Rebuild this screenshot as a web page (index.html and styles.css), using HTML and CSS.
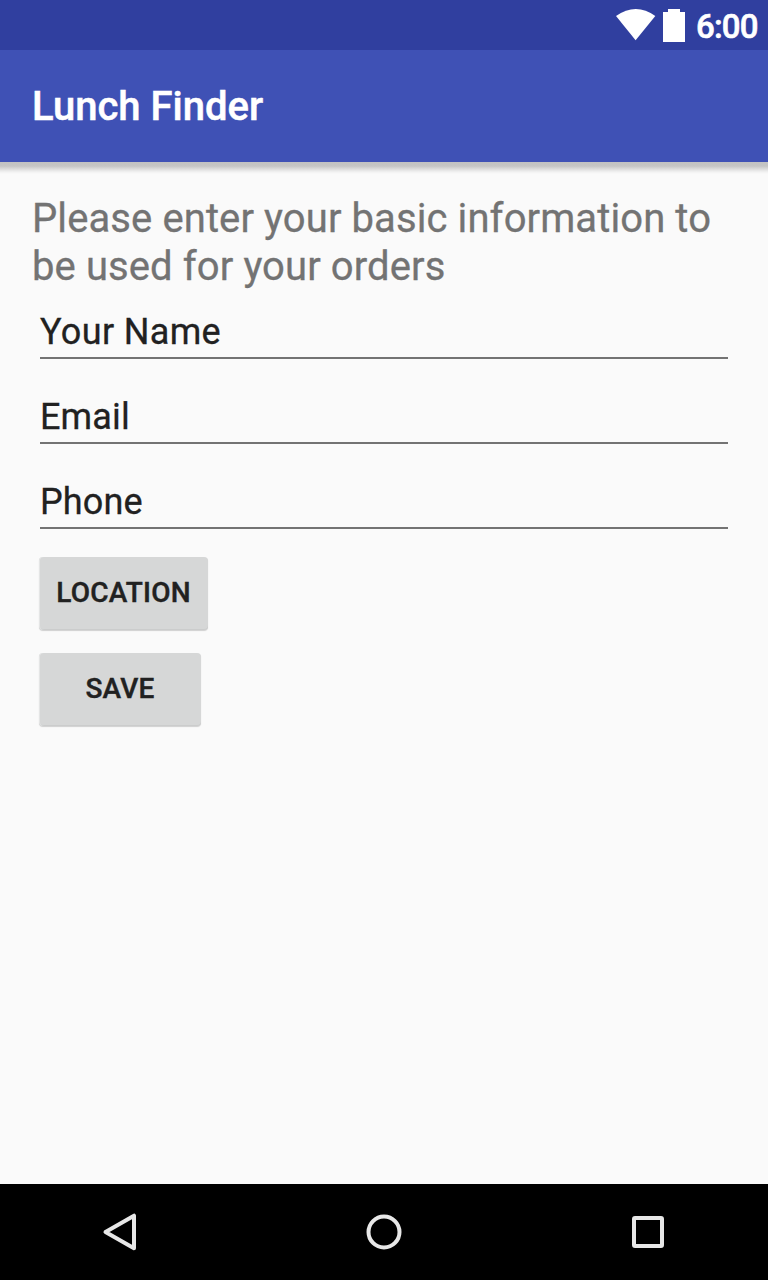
FILE: index.html
```html
<!DOCTYPE html>
<html lang="en">
<head>
<meta charset="utf-8">
<title>Lunch Finder</title>
<link rel="stylesheet" href="styles.css">
</head>
<body>
<div class="screen">
  <div class="status">
    <svg class="wifi" width="40" height="32" viewBox="0 0 40 32"><path d="M0 7Q20-7 39.3 7L19.6 31.3Z" fill="#fff"/></svg>
    <svg class="battery" width="22" height="33" viewBox="0 0 22 33"><path d="M5 0h12v3h5v30H0V3h5z" fill="#fff"/></svg>
    <span class="clock">6:00</span>
  </div>
  <header class="appbar"><h1 class="title">Lunch Finder</h1></header>
  <div class="shadow"></div>
  <main class="content">
    <p class="intro">Please enter your basic information to<br>be used for your orders</p>
    <div class="field field-name">Your Name</div>
    <div class="field">Email</div>
    <div class="field field-last">Phone</div>
    <button class="btn btn-location">LOCATION</button>
    <button class="btn btn-save">SAVE</button>
  </main>
  <nav class="navbar">
    <svg width="36" height="40" viewBox="0 0 36 40"><path d="M32 3.7V36.3L3.5 20Z" fill="none" stroke="#e8e8e8" stroke-width="4" stroke-linejoin="round"/></svg>
    <svg width="36" height="36" viewBox="0 0 36 36"><circle cx="18" cy="18" r="15.5" fill="none" stroke="#e8e8e8" stroke-width="4"/></svg>
    <svg width="36" height="36" viewBox="0 0 36 36"><rect x="4" y="4" width="28" height="28" rx="1" fill="none" stroke="#e8e8e8" stroke-width="4"/></svg>
  </nav>
</div>
</body>
</html>
```
FILE: styles.css
```css
body { margin: 0; font-family: Roboto, sans-serif; }
.screen { width: 768px; height: 1280px; display: flex; flex-direction: column; background: #fafafa; overflow: hidden; }
.status { height: 50px; flex: none; box-sizing: border-box; background: #303f9f; display: flex; align-items: flex-start; justify-content: flex-end; padding: 9px 9px 0 0; color: #fff; }
.battery { margin: 0 11px 0 7px; }
.clock { width: 63px; font-size: 33px; line-height: 35px; font-weight: 500; letter-spacing: -.8px; white-space: nowrap; -webkit-text-stroke: .6px #fff; }
.appbar { height: 112px; flex: none; background: #3f51b5; display: flex; align-items: center; padding-left: 32px; }
.title { margin: 0; color: #fff; font-size: 40px; font-weight: 500; -webkit-text-stroke: .5px #fff; }
.shadow { height: 12px; flex: none; background: linear-gradient(#c2c2c2 0, #c5c5c5 4px, #dcdcdc 7px, #f2f2f2 10px, #fafafa 12px); }
.content { flex: 1; padding: 21px 32px 0; display: flex; flex-direction: column; align-items: flex-start; }
.intro { margin: 0 0 19px; font-size: 40px; line-height: 48px; letter-spacing: .1px; color: #737373; white-space: nowrap; -webkit-text-stroke: .3px #737373; }
.field { width: 688px; height: 49px; box-sizing: border-box; margin: 0 8px 36px; padding-top: 1px; border-bottom: 2px solid #737373; font-size: 36px; line-height: 42px; letter-spacing: .15px; color: #212121; -webkit-text-stroke: .3px #212121; }
.field-name { letter-spacing: .35px; }
.field-last { margin-bottom: 28px; }
.btn { height: 73px; box-sizing: border-box; margin: 0 7px 23px; padding: 0 0 3px; border: 0; border-radius: 4px; background: #d6d7d7; box-shadow: inset 1px 0 #e4e5e5, inset 0 -1px #cbcccc, 0 1px 1px rgba(0,0,0,.17); font: 500 28px Roboto, sans-serif; letter-spacing: .2px; color: #212121; -webkit-text-stroke: .4px #212121; }
.btn-location { width: 169px; }
.btn-save { width: 162px; }
.navbar { height: 96px; flex: none; background: #000; display: flex; align-items: center; justify-content: space-between; padding: 0 102px; }
```
